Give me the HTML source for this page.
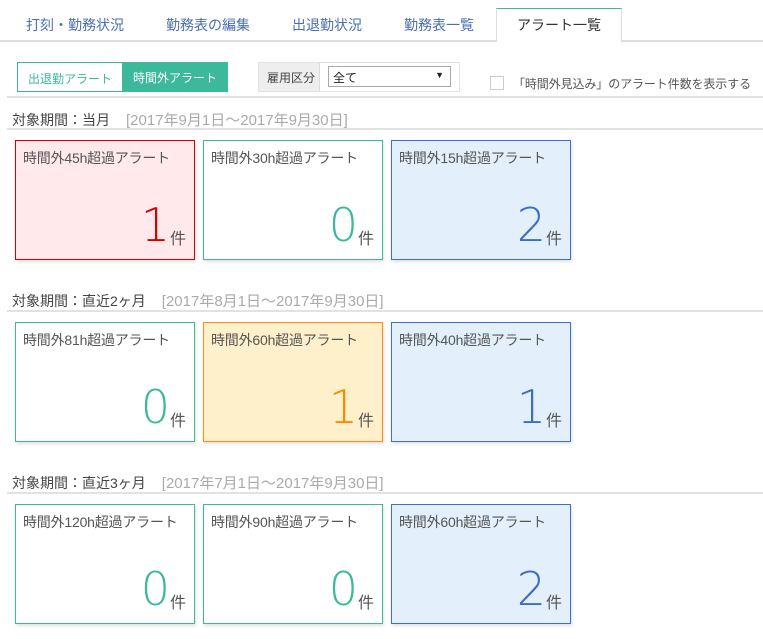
<!DOCTYPE html>
<html><head><meta charset="utf-8"><style>
*{box-sizing:border-box;margin:0;padding:0}
body{width:763px;height:639px;background:#fff;font-family:"Liberation Sans","Noto Sans CJK JP",sans-serif;color:#444;position:relative;overflow:hidden;font-size:13px}
.a{position:absolute;white-space:nowrap}
.tab{position:absolute;top:15px;font-size:14px;color:#4a6fb5}
.card{position:absolute;width:180px;height:120px;border:1px solid #3cb89a;background:#fff;box-shadow:1px 2px 3px rgba(0,0,0,.12)}
.card .t{position:absolute;left:7px;top:7px;font-size:14px;color:#555;letter-spacing:-0.2px}
.card .n{position:absolute;right:24px;bottom:12px;font-size:46px;line-height:44px;color:#3cb89a;font-family:"DejaVu Sans","Liberation Sans",sans-serif;font-weight:300}
.card .k{position:absolute;right:8px;bottom:10px;font-size:16px;color:#555}
.red{border-color:#d40000;background:#ffe9eb}.red .n{color:#d40000}
.blue{border-color:#3a70cc;background:#e3f0fc}.blue .n{color:#3a6cc8}
.org{border-color:#ff8c1a;background:#fff0cc}.org .n{color:#ff8a00}
.hd{position:absolute;left:12px;font-size:14px;color:#444}
.hd span{color:#aaa;margin-left:16px;font-size:15px}
.ln{position:absolute;left:7px;right:0;height:2px;background:#e2e2e2}
</style></head><body>
<div class="tab" style="left:26px">打刻・勤務状況</div>
<div class="tab" style="left:166px">勤務表の編集</div>
<div class="tab" style="left:292px">出退勤状況</div>
<div class="tab" style="left:404px">勤務表一覧</div>
<div class="a" style="left:0;right:0;top:40px;height:2px;background:#ddd"></div>
<div class="a" style="left:496px;top:8px;width:126px;height:34px;background:#fff;border:1px solid #ddd;border-top:1px solid #3cb89a;border-bottom:none"></div>
<div class="tab" style="left:517px;color:#333">アラート一覧</div>

<div class="a" style="left:17px;top:62px;width:106px;height:30px;border:1px solid #3cb89a;color:#3cb89a;font-size:12px;padding:7px 0 0 10px">出退勤アラート</div>
<div class="a" style="left:122px;top:62px;width:106px;height:30px;background:#3cb89a;color:#fff;font-size:12px;padding:7px 0 0 11px">時間外アラート</div>

<div class="a" style="left:258px;top:62px;width:202px;height:30px;border:1px solid #e2e2e2"></div>
<div class="a" style="left:259px;top:63px;width:61px;height:28px;background:#eee;border-right:1px solid #ddd;font-size:12px;padding:6px 0 0 8px">雇用区分</div>
<div class="a" style="left:328px;top:66px;width:123px;height:21px;border:1px solid #aaa;font-size:12px;padding:2px 0 0 4px;color:#222">全て<span style="position:absolute;right:6px;top:3px;font-size:9px">▼</span></div>
<div class="a" style="left:490px;top:76px;width:14px;height:14px;border:1px solid #ccc"></div>
<div class="a" style="left:513px;top:75px;font-size:12px;color:#555;letter-spacing:-0.1px">「時間外見込み」のアラート件数を表示する</div>
<div class="ln" style="top:96px"></div>

<div class="hd" style="top:109px">対象期間：当月<span>[2017年9月1日～2017年9月30日]</span></div>
<div class="ln" style="top:128px"></div>
<div class="card red" style="left:15px;top:140px"><div class="t">時間外45h超過アラート</div><div class="n">1</div><div class="k">件</div></div>
<div class="card" style="left:203px;top:140px"><div class="t">時間外30h超過アラート</div><div class="n">0</div><div class="k">件</div></div>
<div class="card blue" style="left:391px;top:140px"><div class="t">時間外15h超過アラート</div><div class="n">2</div><div class="k">件</div></div>

<div class="hd" style="top:290px">対象期間：直近2ヶ月<span>[2017年8月1日～2017年9月30日]</span></div>
<div class="ln" style="top:310px"></div>
<div class="card" style="left:15px;top:322px"><div class="t">時間外81h超過アラート</div><div class="n">0</div><div class="k">件</div></div>
<div class="card org" style="left:203px;top:322px"><div class="t">時間外60h超過アラート</div><div class="n">1</div><div class="k">件</div></div>
<div class="card blue" style="left:391px;top:322px"><div class="t">時間外40h超過アラート</div><div class="n">1</div><div class="k">件</div></div>

<div class="hd" style="top:472px">対象期間：直近3ヶ月<span>[2017年7月1日～2017年9月30日]</span></div>
<div class="ln" style="top:492px"></div>
<div class="card" style="left:15px;top:504px"><div class="t">時間外120h超過アラート</div><div class="n">0</div><div class="k">件</div></div>
<div class="card" style="left:203px;top:504px"><div class="t">時間外90h超過アラート</div><div class="n">0</div><div class="k">件</div></div>
<div class="card blue" style="left:391px;top:504px"><div class="t">時間外60h超過アラート</div><div class="n">2</div><div class="k">件</div></div>
</body></html>
